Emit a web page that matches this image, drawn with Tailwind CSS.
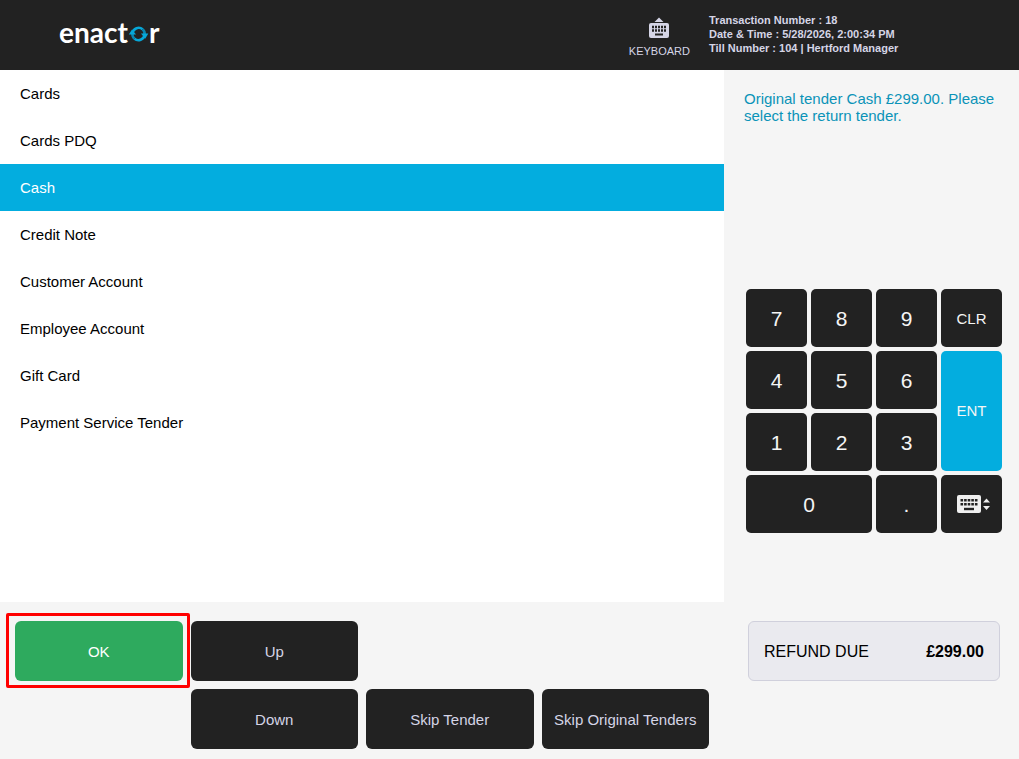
<!DOCTYPE html>
<html lang="en">
<head>
    <meta charset="UTF-8">
    <meta name="viewport" content="width=device-width, initial-scale=1.0">
    <title>Enactor POS - Select Return Tender</title>
    <script src="https://cdn.jsdelivr.net/npm/@tailwindcss/browser@4"></script>
</head>
<body class="bg-[#f5f5f5] font-['Liberation_Sans',Arial,sans-serif] text-[15px] text-black flex flex-col min-h-screen">

    <header class="bg-[#222222] text-[#d5d5e6] h-[70px] shrink-0 flex items-center">
        <div class="flex-1 pl-[59px] pb-1">
            <a href="#" aria-label="enactor" class="inline-flex items-center font-['Lato',sans-serif] font-bold text-[28px] leading-8 text-white">
                <span>enact</span>
                <svg class="w-[21px] h-[18px] mt-1" viewBox="0 0 21 18" fill="none" stroke="#06a7d8" stroke-width="2.6">
                    <path d="M4.500 8A6.200 6.200 0 0 1 14.600 4.300"/>
                    <path d="M16.600 10A6.200 6.200 0 0 1 6.500 13.700"/>
                    <path d="M4.500 8A6.200 6.200 0 0 0 6.500 13.700M16.600 10A6.200 6.200 0 0 0 14.600 4.300" stroke="#0a86b0"/>
                    <path d="M0.800 9.500L4 4.500L8 9.500Z" fill="#06a7d8" stroke="none"/>
                    <path d="M13 8.500H20.300L17.200 13.800Z" fill="#06a7d8" stroke="none"/>
                </svg>
                <span>r</span>
            </a>
        </div>
        <button type="button" class="flex flex-col items-center text-[11px] leading-4 pt-1.5">
            <svg class="w-[22px] h-[22px] mb-1" viewBox="0 0 22 22">
                <path d="M6.500 5L11 0.500L15.500 5Z" fill="#d5d5e6"/>
                <rect x="1" y="6" width="20" height="15" rx="2" fill="#d5d5e6"/>
                <path d="M4 10h14M4 13.500h14" stroke="#222222" stroke-width="2.400" stroke-dasharray="2 1"/>
                <path d="M7 17.500h8" stroke="#222222" stroke-width="2"/>
            </svg>
            KEYBOARD
        </button>
        <div class="w-[310px] ml-[19px] pb-0.5 text-[11px] leading-[14px] font-bold">
            <p>Transaction Number : 18</p>
            <p>Date &amp; Time : 5/28/2026, 2:00:34 PM</p>
            <p>Till Number : 104 | Hertford Manager</p>
        </div>
    </header>

    <main class="flex-1 flex">
        <section class="flex-1 flex flex-col">
            <!-- Tender list -->
            <ul class="flex-1 bg-white">
                <li><button type="button" class="w-full h-[47px] px-5 pt-0.5 text-left">Cards</button></li>
                <li><button type="button" class="w-full h-[47px] px-5 pt-0.5 text-left">Cards PDQ</button></li>
                <li><button type="button" class="w-full h-[47px] px-5 pt-0.5 text-left bg-[#03addf] text-white">Cash</button></li>
                <li><button type="button" class="w-full h-[47px] px-5 pt-0.5 text-left">Credit Note</button></li>
                <li><button type="button" class="w-full h-[47px] px-5 pt-0.5 text-left">Customer Account</button></li>
                <li><button type="button" class="w-full h-[47px] px-5 pt-0.5 text-left">Employee Account</button></li>
                <li><button type="button" class="w-full h-[47px] px-5 pt-0.5 text-left">Gift Card</button></li>
                <li><button type="button" class="w-full h-[47px] px-5 pt-0.5 text-left">Payment Service Tender</button></li>
            </ul>

            <!-- Action buttons -->
            <div class="grid grid-cols-4 gap-2 px-[15px] pt-[19px] pb-[10px] text-[#d5d5e6]">
                <div class="relative">
                    <button type="button" class="w-full h-[60px] pt-0.5 rounded-md bg-[#2eaa5e] text-white">OK</button>
                    <div class="absolute -top-2 -bottom-[7px] -left-[9px] -right-[7px] border-3 border-[#ff0000] rounded-xs pointer-events-none"></div>
                </div>
                <button type="button" class="h-[60px] pt-0.5 rounded-md bg-[#222222]">Up</button>
                <button type="button" class="col-start-2 h-[60px] pt-0.5 rounded-md bg-[#222222]">Down</button>
                <button type="button" class="h-[60px] pt-0.5 rounded-md bg-[#222222]">Skip Tender</button>
                <button type="button" class="h-[60px] pt-0.5 rounded-md bg-[#222222]">Skip Original Tenders</button>
            </div>
        </section>

        <aside class="w-[295px] flex flex-col">
            <p class="px-5 pt-5 h-[219px] leading-[17px] text-[#0a93b8]">Original tender Cash £299.00. Please select the return tender.</p>

            <!-- Keypad -->
            <div class="grid grid-cols-4 auto-rows-[58px] gap-1 pl-[22px] pr-[17px] text-[21px] text-[#f5f5f5]">
                <button type="button" class="pt-0.5 rounded-[5px] bg-[#222222]">7</button>
                <button type="button" class="pt-0.5 rounded-[5px] bg-[#222222]">8</button>
                <button type="button" class="pt-0.5 rounded-[5px] bg-[#222222]">9</button>
                <button type="button" class="pt-0.5 rounded-[5px] bg-[#222222] text-[15px]">CLR</button>
                <button type="button" class="pt-0.5 rounded-[5px] bg-[#222222]">4</button>
                <button type="button" class="pt-0.5 rounded-[5px] bg-[#222222]">5</button>
                <button type="button" class="pt-0.5 rounded-[5px] bg-[#222222]">6</button>
                <button type="button" class="row-span-2 rounded-[5px] bg-[#03addf] text-[15px]">ENT</button>
                <button type="button" class="pt-0.5 rounded-[5px] bg-[#222222]">1</button>
                <button type="button" class="pt-0.5 rounded-[5px] bg-[#222222]">2</button>
                <button type="button" class="pt-0.5 rounded-[5px] bg-[#222222]">3</button>
                <button type="button" class="pt-0.5 col-span-2 rounded-[5px] bg-[#222222]">0</button>
                <button type="button" class="pt-0.5 rounded-[5px] bg-[#222222]">.</button>
                <button type="button" aria-label="Toggle keyboard" class="rounded-[5px] bg-[#222222] flex items-center justify-center">
                    <svg class="w-[36px] h-[20px]" viewBox="0 0 36 20">
                        <rect x="3" y="1" width="24" height="18" rx="2" fill="#f0f0f0"/>
                        <path d="M6.500 6.300h17M6.500 10.300h17" stroke="#222222" stroke-width="2.600" stroke-dasharray="2.600 1"/>
                        <path d="M10 15h10" stroke="#222222" stroke-width="2.400"/>
                        <path d="M29 8.500L32.500 4.500L36 8.500ZM29 12L32.500 16L36 12Z" fill="#f0f0f0"/>
                    </svg>
                </button>
            </div>

            <div class="mt-auto mb-[78px] ml-6 mr-[19px] h-[60px] px-[15px] pt-0.5 flex items-center justify-between rounded-md border border-[#d0d0dc] bg-[#eaeaef] text-base">
                <span>REFUND DUE</span>
                <strong>£299.00</strong>
            </div>
        </aside>
    </main>

</body>
</html>
